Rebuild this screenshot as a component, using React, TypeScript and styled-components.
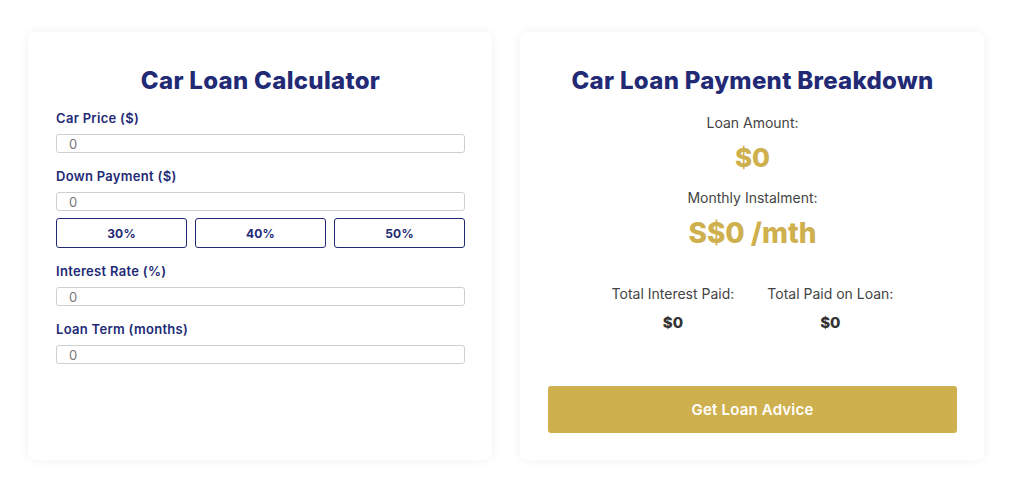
import styled, { createGlobalStyle } from "styled-components";

const GlobalStyle = createGlobalStyle`
    body{
        margin: 0;
        background: #ffffff;
        font-family: "Inter", "Noto Sans", sans-serif;
    }
`

const navy = "#232a75";
const gold = "#cfb04e";

const Field = (props: { label: string }) => {
    return (
        <FieldBox>
            <Label>{props.label}</Label>
            <Input readOnly value="0" />
        </FieldBox>
    );
}

const App = () => {
    const percents = ["30%", "40%", "50%"];
    return (
        <Page>
            <GlobalStyle />
            <Card>
                <Title gap={13}>Car Loan Calculator</Title>
                <Field label="Car Price ($)" />
                <FieldBox>
                    <Label>Down Payment ($)</Label>
                    <Input readOnly value="0" />
                    <PercentRow>
                        {percents.map(p => <PercentButton key={p}>{p}</PercentButton>)}
                    </PercentRow>
                </FieldBox>
                <Field label="Interest Rate (%)" />
                <Field label="Loan Term (months)" />
            </Card>
            <Card>
                <Title gap={17}>Car Loan Payment Breakdown</Title>
                <Caption>Loan Amount:</Caption>
                <BigValue size={26}>$0</BigValue>
                <Caption>Monthly Instalment:</Caption>
                <BigValue size={28}>S$0 /mth</BigValue>
                <Totals>
                    <TotalItem>
                        <Caption>Total Interest Paid:</Caption>
                        <TotalValue>$0</TotalValue>
                    </TotalItem>
                    <TotalItem>
                        <Caption>Total Paid on Loan:</Caption>
                        <TotalValue>$0</TotalValue>
                    </TotalItem>
                </Totals>
                <AdviceButton>Get Loan Advice</AdviceButton>
            </Card>
        </Page>
    );
}

const Page = styled.div`
    display: flex;
    gap: 28px;
    padding: 32px 28px;
`
const Card = styled.div`
    width: 464px;
    height: 428px;
    box-sizing: border-box;
    padding: 34px 27px 0 28px;
    background: #fff;
    border-radius: 8px;
    box-shadow: 0 0 12px rgba(0, 0, 0, 0.06);
    display: flex;
    flex-direction: column;
`
const Title = styled.h2<{ gap: number }>`
    margin: 0 0 ${p => p.gap}px;
    text-align: center;
    color: ${navy};
    font-size: 24px;
    font-weight: 800;
    line-height: 30px;
    letter-spacing: 0.3px;
`
const FieldBox = styled.div`
    display: flex;
    flex-direction: column;
    margin-bottom: 14px;
`
const Label = styled.label`
    color: ${navy};
    font-size: 13px;
    font-weight: 600;
    line-height: 18px;
    letter-spacing: 0.3px;
    margin-bottom: 7px;
`
const Input = styled.input`
    box-sizing: border-box;
    width: 100%;
    height: 19px;
    border: 1px solid #cfcfcf;
    border-radius: 3px;
    padding: 0 12px;
    font-family: inherit;
    font-size: 13px;
    color: #777;
    outline: none;
`
const PercentRow = styled.div`
    display: grid;
    grid-template-columns: repeat(3, 1fr);
    gap: 8px;
    margin-top: 7px;
`
const PercentButton = styled.button`
    height: 30px;
    background: #fff;
    border: 1px solid ${navy};
    border-radius: 3px;
    color: ${navy};
    font-family: inherit;
    font-size: 12px;
    font-weight: 700;
    letter-spacing: 0.2px;
`
const Caption = styled.div`
    text-align: center;
    color: #444;
    font-size: 14px;
    line-height: 20px;
`
const BigValue = styled.div<{ size: number }>`
    text-align: center;
    color: ${gold};
    font-size: ${p => p.size}px;
    font-weight: 800;
    line-height: 34px;
    margin: 8px 0 13px;
`
const Totals = styled.div`
    display: flex;
    justify-content: center;
    gap: 33px;
    margin-top: 21px;
`
const TotalItem = styled.div`
    display: flex;
    flex-direction: column;
    align-items: center;
    gap: 9px;
`
const TotalValue = styled.div`
    color: #333;
    font-size: 15px;
    font-weight: 800;
`
const AdviceButton = styled.button`
    margin-top: 54px;
    height: 47px;
    width: 100%;
    border: none;
    border-radius: 3px;
    background: ${gold};
    color: #fff;
    font-family: inherit;
    font-size: 15px;
    font-weight: 600;
    letter-spacing: 0.2px;
`

export default App;
